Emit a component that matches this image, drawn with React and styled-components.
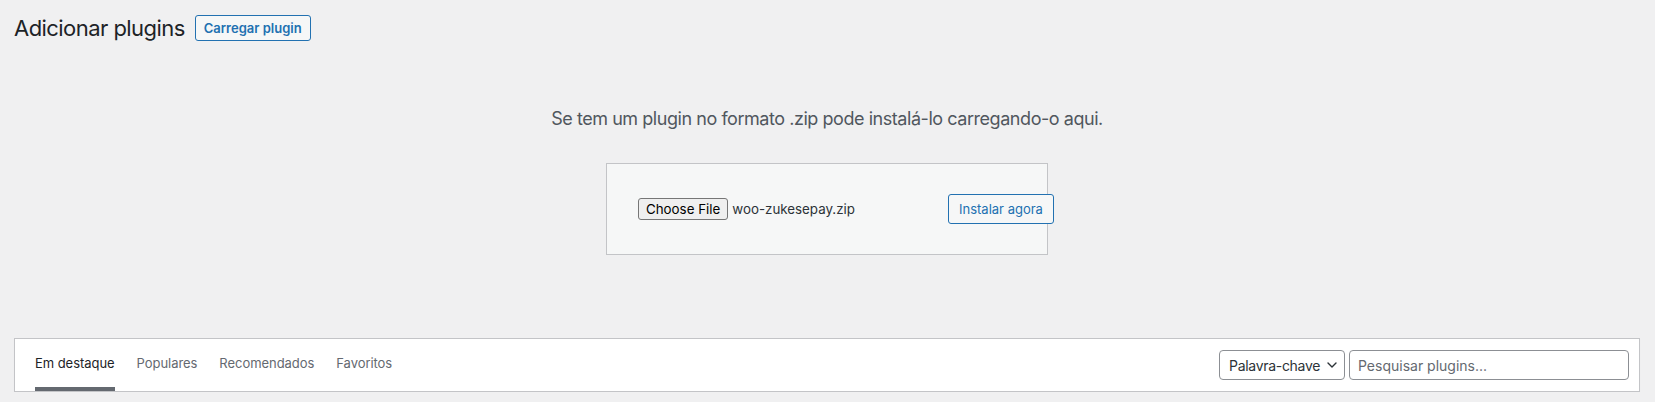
import React from "react";
import styled, { createGlobalStyle } from "styled-components";

const Global = createGlobalStyle`
  html, body { margin: 0; padding: 0; background: #f0f0f1; }
  body {
    font-family: Inter, "Noto Sans", Roboto, sans-serif;
    color: #3c434a;
    -webkit-font-smoothing: antialiased;
  }
  * { box-sizing: border-box; }
`;

const Wrap = styled.div`
  padding: 0 15px 0 14px;
  display: flex;
  flex-direction: column;
`;

const Header = styled.div`
  display: flex;
  align-items: center;
  gap: 10px;
  height: 26px;
  margin-top: 15px;
`;

const Title = styled.h1`
  margin: 0;
  font-size: 22px;
  letter-spacing: -0.55px;
  font-weight: 400;
  line-height: 26px;
  color: #1d2327;
`;

const OutlineButton = styled.button`
  font-family: inherit;
  font-size: 13px;
  font-weight: ${(p) => (p.$bold ? 600 : 400)};
  color: #2271b1;
  background: #f6f7f7;
  border: 1px solid #2271b1;
  border-radius: 3px;
  height: ${(p) => p.$h}px;
  padding: 0 ${(p) => p.$px}px;
  white-space: nowrap;
  flex: none;
  cursor: pointer;
`;

const Help = styled.p`
  margin: 64px 0 0;
  font-size: 18px;
  letter-spacing: -0.45px;
  line-height: 27px;
  color: #50575e;
  text-align: center;
`;

const UploadForm = styled.div`
  align-self: center;
  width: 442px;
  margin-top: 31px;
  background: #f6f7f7;
  border: 1px solid #c3c4c7;
  padding: 30px;
  display: flex;
  align-items: center;
`;

const FileGroup = styled.div`
  width: 311px;
  flex: none;
  display: flex;
  align-items: center;
  gap: 4px;
  padding-left: 1px;
`;

const ChooseButton = styled.span`
  display: inline-flex;
  align-items: center;
  height: 22px;
  padding: 0 7px;
  font-size: 13.33px;
  color: #000;
  background: #efefef;
  border: 1px solid #767676;
  border-radius: 3px;
`;

const FileName = styled.span`
  font-size: 13.33px;
  color: #2c3338;
`;

const Filter = styled.div`
  margin-top: 83px;
  background: #fff;
  border: 1px solid #c3c4c7;
  box-shadow: 0 1px 1px rgba(0, 0, 0, 0.04);
  padding: 0 10px;
  display: flex;
  align-items: center;
  justify-content: space-between;
  height: 54px;
`;

const Tabs = styled.ul`
  list-style: none;
  margin: 0;
  padding: 0 0 0 10px;
  display: flex;
  gap: 22px;
  align-self: stretch;
`;

const Tab = styled.li`
  padding: 15px 0 0;
  font-size: 13px;
  letter-spacing: -0.05px;
  line-height: 18px;
  color: ${(p) => (p.$current ? "#1d2327" : "#646970")};
  border-bottom: 4px solid ${(p) => (p.$current ? "#646970" : "#fff")};
  cursor: pointer;
`;

const Search = styled.div`
  display: flex;
  gap: 4px;
`;

const Select = styled.div`
  width: 126px;
  height: 30px;
  border: 1px solid #8c8f94;
  border-radius: 4px;
  padding: 0 7px 0 9px;
  display: flex;
  align-items: center;
  justify-content: space-between;
  font-size: 14px;
  letter-spacing: -0.3px;
  color: #2c3338;
  background: #fff;
`;

const Input = styled.div`
  width: 280px;
  height: 30px;
  border: 1px solid #8c8f94;
  border-radius: 4px;
  padding: 0 8px;
  display: flex;
  align-items: center;
  font-size: 14px;
  color: #646970;
  background: #fff;
`;

const Chevron = () => (
  <svg width="10" height="6" viewBox="0 0 10 6" fill="none">
    <path d="M1 1l4 4 4-4" stroke="#2c3338" strokeWidth="1.4" strokeLinecap="round" strokeLinejoin="round" />
  </svg>
);

export default function App() {
  return (
    <>
      <Global />
      <Wrap>
        <Header>
          <Title>Adicionar plugins</Title>
          <OutlineButton $bold $h={26} $px={8}>Carregar plugin</OutlineButton>
        </Header>
        <Help>Se tem um plugin no formato .zip pode instalá-lo carregando-o aqui.</Help>
        <UploadForm>
          <FileGroup>
            <ChooseButton>Choose File</ChooseButton>
            <FileName>woo-zukesepay.zip</FileName>
          </FileGroup>
          <OutlineButton $h={30} $px={10}>Instalar agora</OutlineButton>
        </UploadForm>
        <Filter>
          <Tabs>
            <Tab $current>Em destaque</Tab>
            <Tab>Populares</Tab>
            <Tab>Recomendados</Tab>
            <Tab>Favoritos</Tab>
          </Tabs>
          <Search>
            <Select>
              <span>Palavra-chave</span>
              <Chevron />
            </Select>
            <Input>Pesquisar plugins...</Input>
          </Search>
        </Filter>
      </Wrap>
    </>
  );
}
